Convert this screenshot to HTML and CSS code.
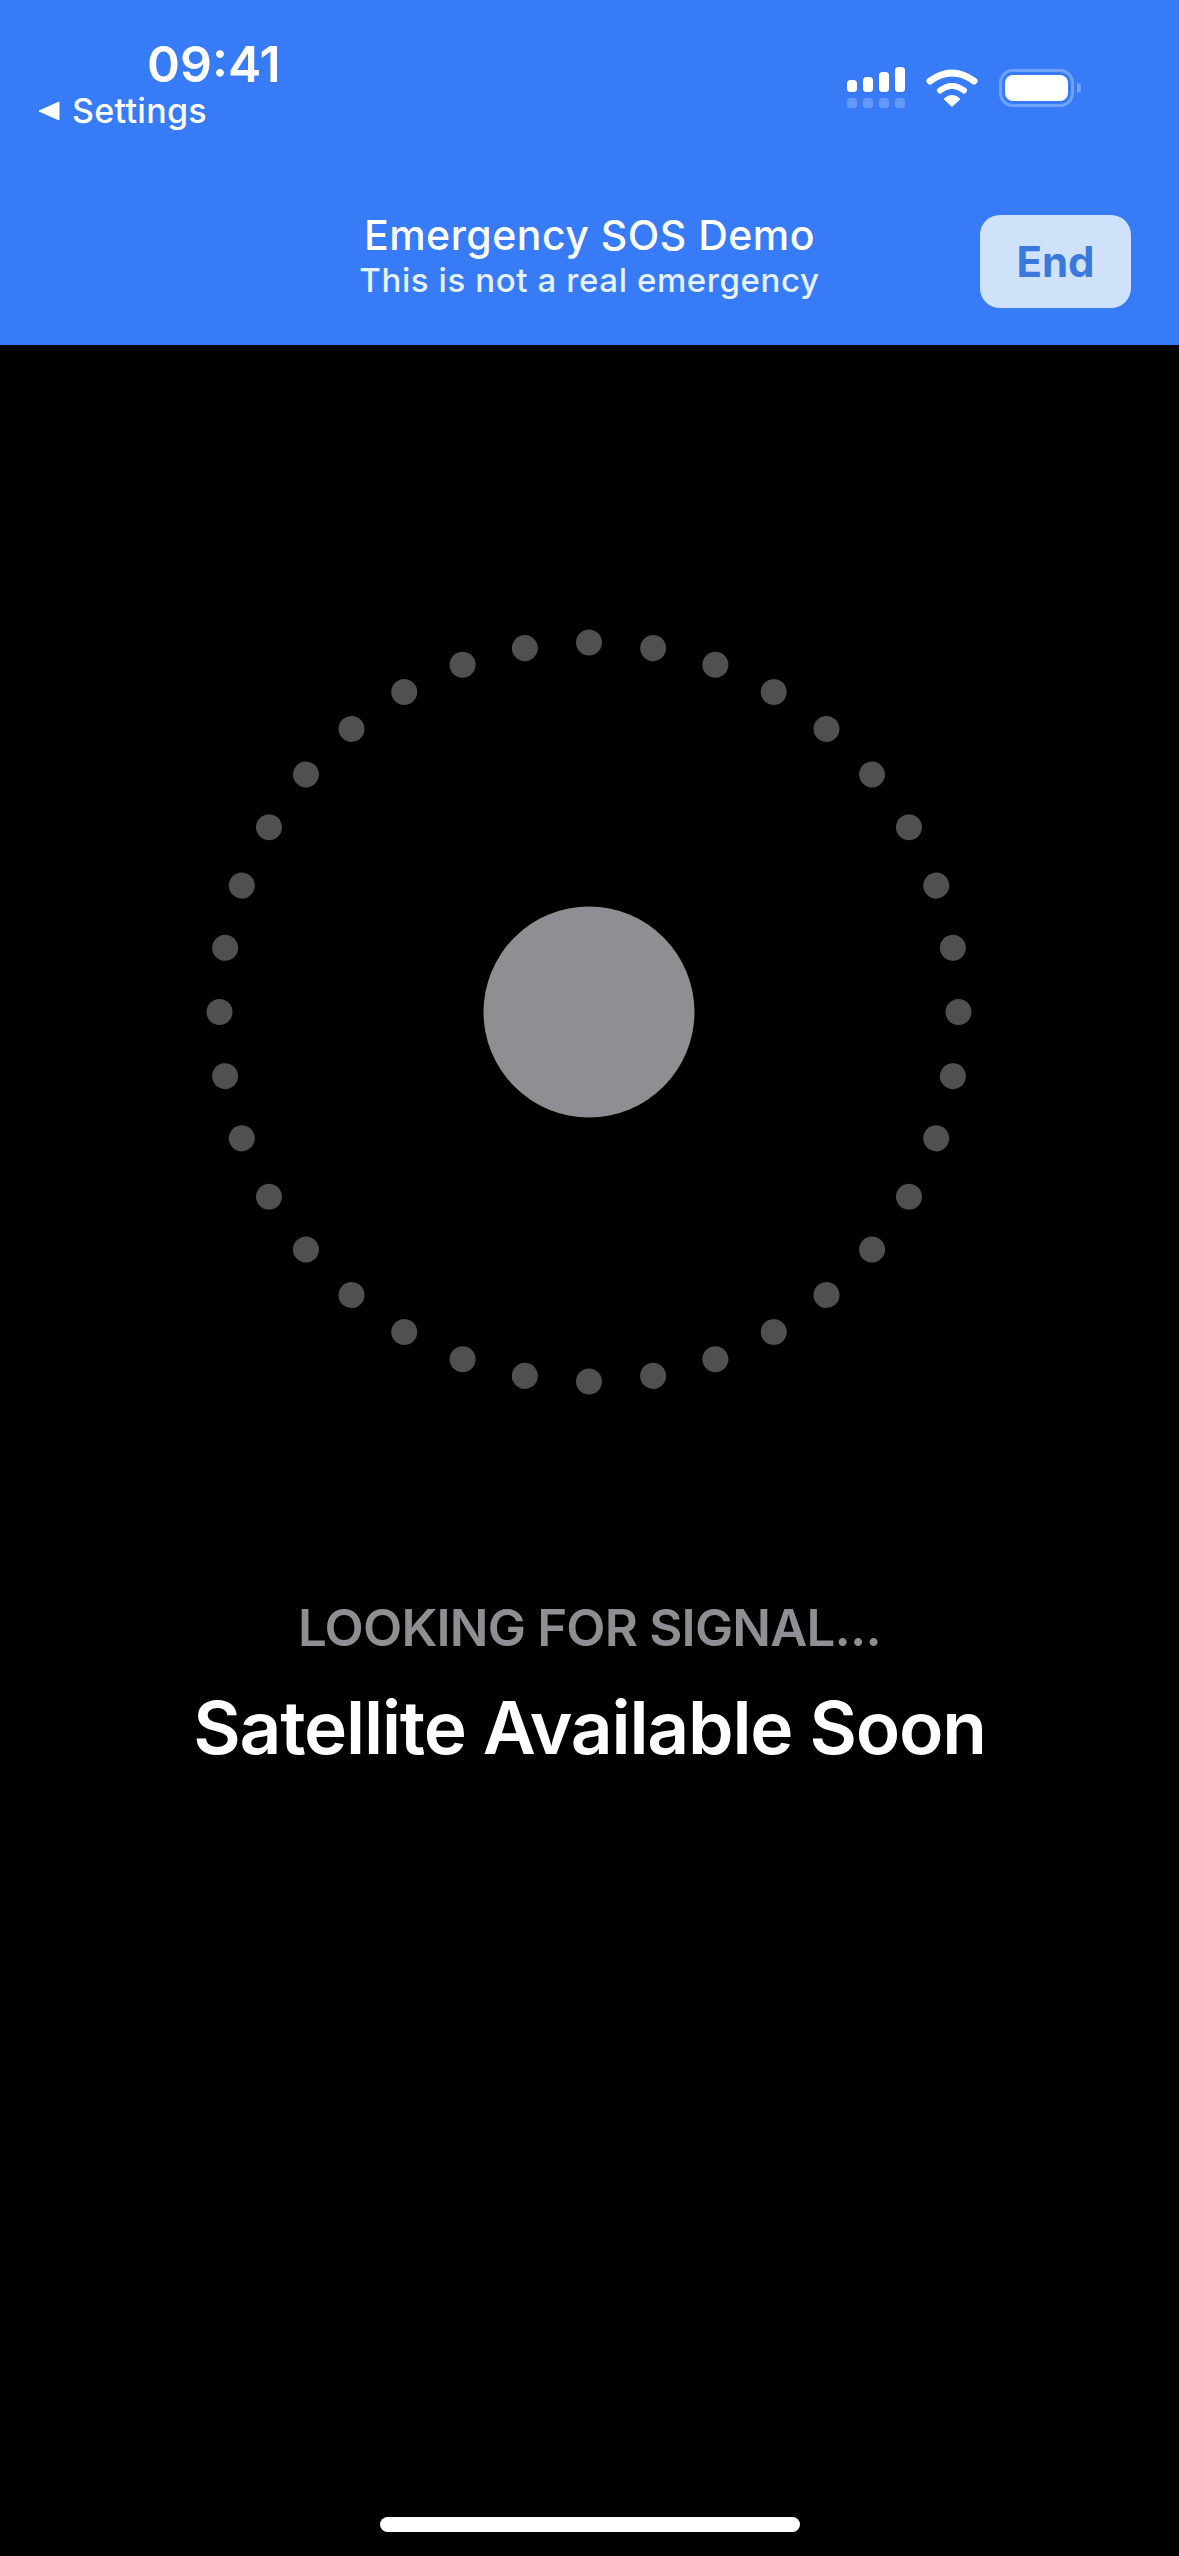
FILE: index.html
```html
<!DOCTYPE html>
<html lang="en">
<head>
<meta charset="UTF-8">
<meta name="viewport" content="width=device-width, initial-scale=1.0">
<title>Emergency SOS Demo</title>
<link rel="stylesheet" href="styles.css">
</head>
<body>
<header class="banner">
    <div class="status-bar">
        <div class="status-left">
            <div class="clock">09:41</div>
            <div class="back-link">
                <svg class="back-arrow" width="22" height="20" viewBox="0 0 22 20"><path d="M1 10 L21 1 V19 Z" fill="#fff" stroke="#fff" stroke-width="1" stroke-linejoin="round"/></svg>
                <span>Settings</span>
            </div>
        </div>
        <div class="status-right">
            <svg class="signal" width="58" height="42" viewBox="0 0 58 42">
                <g fill="#fff">
                    <rect x="0" y="13" width="10" height="12" rx="3.5"/>
                    <rect x="16" y="10" width="10" height="15" rx="3.5"/>
                    <rect x="32" y="5" width="10" height="20" rx="3.5"/>
                    <rect x="48" y="0" width="10" height="25" rx="3.5"/>
                </g>
                <g fill="#fff" opacity="0.22">
                    <rect x="0" y="31" width="10" height="10" rx="3"/>
                    <rect x="16" y="31" width="10" height="10" rx="3"/>
                    <rect x="32" y="31" width="10" height="10" rx="3"/>
                    <rect x="48" y="31" width="10" height="10" rx="3"/>
                </g>
            </svg>
            <svg class="wifi" width="52" height="40" viewBox="0 0 52 40">
                <path d="M4 13 Q26 -3 48 13" fill="none" stroke="#fff" stroke-width="7" stroke-linecap="round"/>
                <path d="M14 22.5 Q26 13.5 38 22.5" fill="none" stroke="#fff" stroke-width="6" stroke-linecap="round"/>
                <path d="M18.5 31 Q26 24.5 33.5 31 L26 38 Z" fill="#fff" stroke="#fff" stroke-width="1.5" stroke-linejoin="round"/>
            </svg>
            <div class="battery">
                <div class="battery-body"><div class="battery-level"></div></div>
                <div class="battery-cap"></div>
            </div>
        </div>
    </div>
    <div class="title-row">
        <div class="titles">
            <div class="title">Emergency SOS Demo</div>
            <div class="subtitle">This is not a real emergency</div>
        </div>
        <button class="end-button" type="button">End</button>
    </div>
</header>

<main class="content">
    <svg class="ring" width="800" height="800" viewBox="0 0 800 800">
        <g class="ring-dots">
            <circle cx="400" cy="30.5" r="13"/>
            <circle cx="400" cy="30.5" r="13" transform="rotate(10 400 400)"/>
            <circle cx="400" cy="30.5" r="13" transform="rotate(20 400 400)"/>
            <circle cx="400" cy="30.5" r="13" transform="rotate(30 400 400)"/>
            <circle cx="400" cy="30.5" r="13" transform="rotate(40 400 400)"/>
            <circle cx="400" cy="30.5" r="13" transform="rotate(50 400 400)"/>
            <circle cx="400" cy="30.5" r="13" transform="rotate(60 400 400)"/>
            <circle cx="400" cy="30.5" r="13" transform="rotate(70 400 400)"/>
            <circle cx="400" cy="30.5" r="13" transform="rotate(80 400 400)"/>
            <circle cx="400" cy="30.5" r="13" transform="rotate(90 400 400)"/>
            <circle cx="400" cy="30.5" r="13" transform="rotate(100 400 400)"/>
            <circle cx="400" cy="30.5" r="13" transform="rotate(110 400 400)"/>
            <circle cx="400" cy="30.5" r="13" transform="rotate(120 400 400)"/>
            <circle cx="400" cy="30.5" r="13" transform="rotate(130 400 400)"/>
            <circle cx="400" cy="30.5" r="13" transform="rotate(140 400 400)"/>
            <circle cx="400" cy="30.5" r="13" transform="rotate(150 400 400)"/>
            <circle cx="400" cy="30.5" r="13" transform="rotate(160 400 400)"/>
            <circle cx="400" cy="30.5" r="13" transform="rotate(170 400 400)"/>
            <circle cx="400" cy="30.5" r="13" transform="rotate(180 400 400)"/>
            <circle cx="400" cy="30.5" r="13" transform="rotate(190 400 400)"/>
            <circle cx="400" cy="30.5" r="13" transform="rotate(200 400 400)"/>
            <circle cx="400" cy="30.5" r="13" transform="rotate(210 400 400)"/>
            <circle cx="400" cy="30.5" r="13" transform="rotate(220 400 400)"/>
            <circle cx="400" cy="30.5" r="13" transform="rotate(230 400 400)"/>
            <circle cx="400" cy="30.5" r="13" transform="rotate(240 400 400)"/>
            <circle cx="400" cy="30.5" r="13" transform="rotate(250 400 400)"/>
            <circle cx="400" cy="30.5" r="13" transform="rotate(260 400 400)"/>
            <circle cx="400" cy="30.5" r="13" transform="rotate(270 400 400)"/>
            <circle cx="400" cy="30.5" r="13" transform="rotate(280 400 400)"/>
            <circle cx="400" cy="30.5" r="13" transform="rotate(290 400 400)"/>
            <circle cx="400" cy="30.5" r="13" transform="rotate(300 400 400)"/>
            <circle cx="400" cy="30.5" r="13" transform="rotate(310 400 400)"/>
            <circle cx="400" cy="30.5" r="13" transform="rotate(320 400 400)"/>
            <circle cx="400" cy="30.5" r="13" transform="rotate(330 400 400)"/>
            <circle cx="400" cy="30.5" r="13" transform="rotate(340 400 400)"/>
            <circle cx="400" cy="30.5" r="13" transform="rotate(350 400 400)"/>
        </g>
        <circle class="ring-center" cx="400" cy="400" r="105.5"/>
    </svg>
    <p class="signal-label">LOOKING FOR SIGNAL...</p>
    <h1 class="signal-title">Satellite Available Soon</h1>
    <div class="home-bar"></div>
</main>
</body>
</html>
```

FILE: styles.css
```css
* {
    box-sizing: border-box;
}
html, body {
    margin: 0;
    padding: 0;
}
body {
    width: 1179px;
    height: 2556px;
    display: flex;
    flex-direction: column;
    background-color: #000;
    color: #fff;
    font-family: Inter, "Liberation Sans", sans-serif;
    overflow: hidden;
}
.banner {
    height: 345px;
    flex-shrink: 0;
    background-color: #377cf6;
}
.status-bar {
    height: 129px;
    display: flex;
    justify-content: space-between;
    padding: 36px 103px 0 38px;
}
.clock {
    margin-left: 109px;
    font-size: 50px;
    font-weight: 600;
    line-height: 56px;
}
.back-link {
    display: flex;
    align-items: center;
    gap: 12px;
    font-size: 34px;
    font-weight: 500;
    line-height: 38px;
    letter-spacing: 0.3px;
}
.status-right {
    display: flex;
    align-items: flex-start;
    gap: 21px;
    padding-top: 31px;
}
.wifi {
    margin-top: 1px;
}
.battery {
    display: flex;
    align-items: center;
    gap: 3px;
    margin-top: 2px;
    margin-right: -5px;
}
.battery-body {
    width: 75px;
    height: 38px;
    padding: 3px;
    border: 3px solid #6ea3f8;
    border-radius: 14px;
}
.battery-level {
    height: 100%;
    background-color: #fff;
    border-radius: 8px;
}
.battery-cap {
    width: 4px;
    height: 10px;
    background-color: #6ea3f8;
    border-radius: 0 4px 4px 0;
}
.title-row {
    position: relative;
    display: flex;
    justify-content: center;
    padding-top: 82px;
}
.titles {
    text-align: center;
}
.title {
    font-size: 41px;
    font-weight: 500;
    line-height: 49px;
    letter-spacing: 0.5px;
}
.subtitle {
    font-size: 33px;
    font-weight: 500;
    line-height: 41px;
    letter-spacing: 0.6px;
    color: #e6f1fe;
}
.end-button {
    position: absolute;
    top: 86px;
    right: 48px;
    width: 151px;
    height: 93px;
    padding: 0;
    border: none;
    border-radius: 20px;
    background-color: #cfe2fa;
    color: #3a78dc;
    font-family: inherit;
    font-size: 42px;
    font-weight: 700;
}
.content {
    flex: 1;
    display: flex;
    flex-direction: column;
    align-items: center;
    padding-top: 267px;
}
.ring {
    display: block;
    flex-shrink: 0;
    margin-left: -1px;
}
.ring-dots {
    fill: #505051;
}
.ring-center {
    fill: #8e8e93;
}
.signal-label {
    margin: 187px 0 0;
    font-size: 51px;
    font-weight: 600;
    line-height: 58px;
    letter-spacing: -0.8px;
    color: #8e8e93;
}
.signal-title {
    margin: 28px 0 0;
    font-size: 73px;
    font-weight: 600;
    line-height: 86px;
    letter-spacing: -1.2px;
    color: #fff;
}
.home-bar {
    width: 420px;
    height: 15px;
    margin-top: auto;
    margin-bottom: 24px;
    background-color: #fff;
    border-radius: 8px;
}
```
